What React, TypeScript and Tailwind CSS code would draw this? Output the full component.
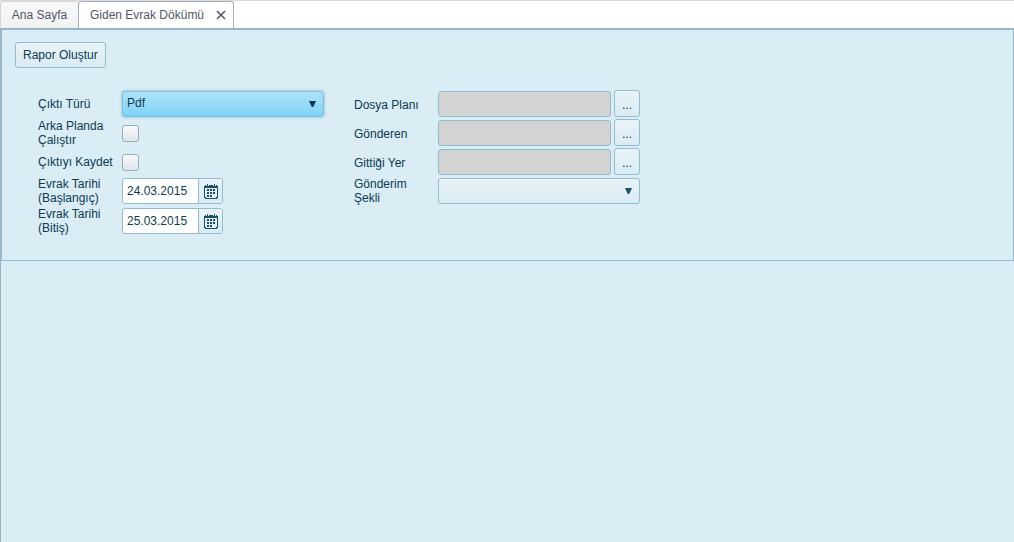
import React from "react";

const controlBorder = "border border-[#92bdce] rounded-[3px]";
const buttonFill = "bg-linear-to-b from-[#e9f3f8] to-[#d9ebf3]";

const CalendarIcon = () => (
    <svg width="14" height="15" viewBox="0 0 14 15" shapeRendering="crispEdges" aria-hidden="true">
        <path fill="#1c4f66" d="M1 1h2V0h1v1h6V0h1v1h2v1h1v12h-1v1H1v-1H0V2h1z" />
        <path fill="#e6f1f6" d="M1 4h12v9h-1v1H2v-1H1z" />
        <path fill="#e6f1f6" d="M2 1h1v1H2zM4 1h1v1H4zM9 1h1v1H9zM11 1h1v1h-1z" />
        <path
            fill="#1c4f66"
            d="M3 5h2v2H3zM6 5h2v2H6zM9 5h2v2H9zM3 8h2v2H3zM6 8h2v2H6zM9 8h2v2H9zM3 11h2v2H3zM6 11h2v2H6z"
        />
    </svg>
);

const Label: React.FC<{ id: string; children: React.ReactNode }> = ({ id, children }) => (
    <label htmlFor={id} className="w-[84px] shrink-0 pr-2 leading-[14px]">
        {children}
    </label>
);

const SelectBox: React.FC<{ id: string; active?: boolean; options: string[] }> = ({ id, active, options }) => (
    <div className="relative w-[202px]">
        <select
            id={id}
            className={`block h-[26px] w-full appearance-none px-1 pb-0.5 outline-none ${
                active
                    ? "rounded-[3px] border border-[#79c1e0] bg-linear-to-b from-[#aee3fa] to-[#7fd2f5] shadow-[0_0_3px_#85b2cb]"
                    : `${controlBorder} ${buttonFill}`
            }`}
        >
            {options.map((option) => (
                <option key={option}>{option}</option>
            ))}
        </select>
        <svg
            width="7"
            height="6"
            viewBox="0 0 7 6"
            className="pointer-events-none absolute top-[10px] right-2"
            aria-hidden="true"
        >
            <path d="M0 0h7L4.2 6H2.8z" fill={active ? "#07384f" : "#1c4f66"} />
        </svg>
    </div>
);

const DateField: React.FC<{ id: string; value: string }> = ({ id, value }) => (
    <div className={`flex h-[26px] w-[101px] overflow-hidden bg-white ${controlBorder}`}>
        <input id={id} defaultValue={value} className="w-[75px] min-w-0 pl-1 pb-px outline-none" />
        <button
            type="button"
            aria-label="Takvim"
            className={`flex flex-1 items-center justify-center border-l border-[#92bdce] ${buttonFill}`}
        >
            <CalendarIcon />
        </button>
    </div>
);

const LookupRow: React.FC<{ id: string; label: string }> = ({ id, label }) => (
    <div className="flex h-[27px] items-center">
        <Label id={id}>
            <span className="block pt-0.5">{label}</span>
        </Label>
        <input id={id} disabled className={`h-[26px] w-[173px] self-end bg-[#d3d3d3] px-1 ${controlBorder}`} />
        <button type="button" aria-label={`${label} seç`} className={`ml-[3px] h-[27px] w-[26px] pt-0.5 ${controlBorder} ${buttonFill}`}>
            ...
        </button>
    </div>
);

const CheckRow: React.FC<{ id: string; label: string }> = ({ id, label }) => (
    <div className="flex min-h-[26px] items-center">
        <Label id={id}>{label}</Label>
        <input
            id={id}
            type="checkbox"
            className="size-[17px] appearance-none rounded-[3px] border border-[#92afc2] bg-linear-to-b from-[#f8f9fa] to-[#e1e5ea] checked:bg-[#79c1e0]"
        />
    </div>
);

const App: React.FC = () => (
    <div className="flex min-h-screen flex-col bg-white font-['Liberation_Sans',Arial,sans-serif] text-xs text-[#0d3b52]">
        <nav className="flex h-[28px] items-stretch border-t border-[#d9d9d9] text-[#4f5867]">
            <button
                type="button"
                className="w-[78px] rounded-t-[3px] border-t border-l border-[#d4d4d4] bg-linear-to-b from-[#f9f9f9] to-[#f1f1f1]"
            >
                Ana Sayfa
            </button>
            <div className="-mb-px flex w-[156px] items-center rounded-t-[3px] border border-b-0 border-[#a4aec2] bg-white pr-[7px] pb-0.5 pl-[11px]">
                <button type="button" className="flex-1 text-left whitespace-nowrap">
                    Giden Evrak Dökümü
                </button>
                <button type="button" aria-label="Kapat">
                    <svg width="10" height="10" viewBox="0 0 10 10" aria-hidden="true">
                        <path d="M1 1l8 8M9 1l-8 8" stroke="#4f5867" strokeWidth="1.6" />
                    </svg>
                </button>
            </div>
        </nav>

        <main className="flex-1 border-t border-l border-[#a4aec2] bg-[#daecf4]">
            <form className="border border-[#8fbdd0] px-[13px] pt-3 pb-[25px]" onSubmit={(e) => e.preventDefault()}>
                <button type="submit" className={`h-[26px] px-[7px] ${controlBorder} ${buttonFill}`}>
                    Rapor Oluştur
                </button>

                <div className="mt-[22px] flex items-start gap-[30px] pl-[23px]">
                    <div className="flex flex-col gap-0.5">
                        <div className="flex h-[27px] items-center pt-px">
                            <Label id="output-type">Çıktı Türü</Label>
                            <SelectBox id="output-type" active options={["Pdf"]} />
                        </div>
                        <CheckRow id="run-background" label="Arka Planda Çalıştır" />
                        <CheckRow id="save-output" label="Çıktıyı Kaydet" />
                        <div className="flex items-center">
                            <Label id="date-start">Evrak Tarihi (Başlangıç)</Label>
                            <DateField id="date-start" value="24.03.2015" />
                        </div>
                        <div className="flex items-center">
                            <Label id="date-end">Evrak Tarihi (Bitiş)</Label>
                            <DateField id="date-end" value="25.03.2015" />
                        </div>
                    </div>

                    <div className="flex flex-col gap-0.5">
                        <LookupRow id="file-plan" label="Dosya Planı" />
                        <LookupRow id="sender" label="Gönderen" />
                        <LookupRow id="destination" label="Gittiği Yer" />
                        <div className="flex items-center">
                            <Label id="send-type">Gönderim Şekli</Label>
                            <SelectBox id="send-type" options={[""]} />
                        </div>
                    </div>
                </div>
            </form>
        </main>
    </div>
);

export default App;
